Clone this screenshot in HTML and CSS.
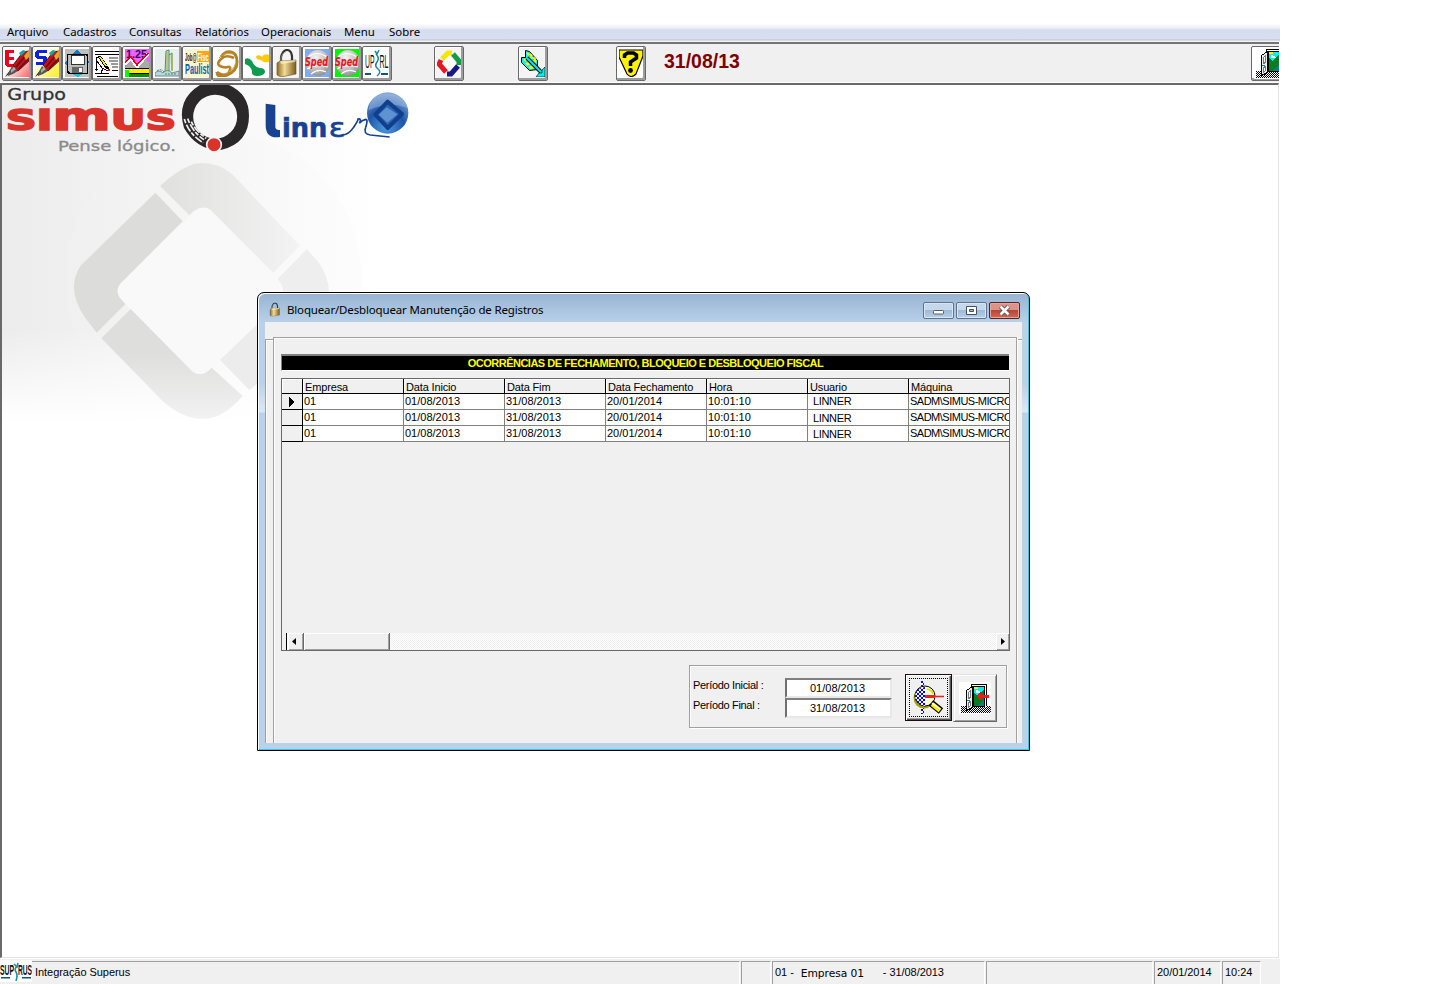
FILE: index.html
```html
<!DOCTYPE html>
<html lang="pt-BR">
<head>
<meta charset="utf-8">
<title>Integração Superus</title>
<link rel="stylesheet" href="styles.css">
</head>
<body>
<svg class="defs" width="0" height="0">
  <defs>
    <pattern id="dither" width="2" height="2" patternUnits="userSpaceOnUse"><path fill="#000" d="M0 0h1v1H0zM1 1h1v1H1z"/></pattern>
    <pattern id="bluedots" width="4" height="4" patternUnits="userSpaceOnUse"><rect width="4" height="4" fill="#fff"/><path fill="#00f" d="M0 0h2v2H0zM2 2h2v2H2z"/></pattern>
    <linearGradient id="redfade" x1="0" y1="0" x2="1" y2="1"><stop offset=".4" stop-color="#fff"/><stop offset="1" stop-color="#f66"/></linearGradient>
    <linearGradient id="yelfade" x1="0" y1="0" x2="1" y2="1"><stop offset=".3" stop-color="#fffbe0"/><stop offset="1" stop-color="#ffee20"/></linearGradient>
    <linearGradient id="brass" x1="0" x2="1"><stop offset="0" stop-color="#8a6a26"/><stop offset=".4" stop-color="#f3dc98"/><stop offset="1" stop-color="#7c5a1e"/></linearGradient>
    <radialGradient id="ball" cx=".4" cy=".3" r=".8"><stop offset="0" stop-color="#f4f4f4"/><stop offset=".6" stop-color="#bdbdbd"/><stop offset="1" stop-color="#808080"/></radialGradient>
    <symbol id="pen" viewBox="0 0 24 28">
      <path fill="#111" d="M0 28l6-8 2 2z"/><path fill="#555" d="M3 25l4-8 6 5-5 3-5 2z"/><path fill="#aaa" d="M6 21l3-3 2 2-5 4z"/>
      <path fill="#c8101c" stroke="#400" stroke-width=".8" d="M8 16L18 3l6-1v10L13 22z"/>
      <path fill="none" stroke="#611" stroke-width="1.800" d="M11 18L21 6M14 20l9-10"/><path fill="#16a6a6" d="M14 4l4-3 3 1-5 5z"/><path fill="#e5a720" d="M19 7l5-6v7l-3 3z"/>
    </symbol>
    <symbol id="door" viewBox="0 0 32 32">
      <rect width="32" height="32" fill="#fff"/>
      <path fill="url(#dither)" d="M2 24h30v7H2z"/>
      <path fill="#fff" d="M12 2h15v23H12z"/>
      <path fill="#0ee" d="M14 5h12v10H14z"/><path fill="#fe0" d="M15 4h4v3h-4z"/>
      <path fill="#fff" d="M17 8h2v1h2v1h2v1h-6z"/><path fill="#087c20" d="M14 10l4 4 7-6 1 6v10H14z"/><path fill="#088080" d="M18 24l8-8v8z"/>
      <path fill="none" stroke="#000" d="M12.500 5V2.500h15V24M14.500 24V4.500h11V24M14 24.500h12"/>
      <path fill="#eee" stroke="#000" d="M7.500 8.500l6-4v21l-6 3z"/><path fill="#fff" stroke="#777" d="M9.500 10.500l2-2v7l-2 1zM9.500 20.500l2-1v4l-2 2z"/><path fill="#088" d="M8 18h3v1H8z"/>
    </symbol>
    <symbol id="lock" viewBox="0 0 24 28">
      <path fill="none" stroke="#333" stroke-width="2.200" d="M6 13V8Q8 1 12 1T17 7v5"/><path fill="none" stroke="#aaa" stroke-width=".7" d="M6 12V8q2-5 5-5"/>
      <path fill="url(#brass)" stroke="#6a4f1c" stroke-width=".6" d="M2 14l3-2 16-1v14l-15 3-4-2z"/><path fill="#fff3c4" opacity=".7" d="M5 12l16-1-1 2-14 2z"/>
    </symbol>
    <symbol id="sped" viewBox="0 0 24 28">
      <ellipse cx="13" cy="14" rx="12" ry="13" fill="url(#ball)"/>
      <path fill="none" stroke="#fff" stroke-width="1.200" d="M3 8q9-7 19 0M2 20q10-6 21-2M6 25q8-6 15-2"/>
      <text class="sped-text" x="0" y="17" textLength="23" lengthAdjust="spacingAndGlyphs">Sped</text>
    </symbol>
  </defs>
</svg>
<div class="app">
  <nav class="menu">
    <span class="m1">Arquivo</span><span class="m2">Cadastros</span><span class="m3">Consultas</span><span class="m4">Relatórios</span><span class="m5">Operacionais</span><span class="m6">Menu</span><span class="m7">Sobre</span>
  </nav>
  <div class="toolbar">
    <div class="group">
      <button class="tool"><svg viewBox="0 0 24 28"><rect width="24" height="28" fill="url(#redfade)"/><path class="crisp" fill="#f0001c" d="M0 1h9v3H4v4h5v3H4v4h7v3H2L0 15z"/><use href="#pen" width="24" height="28"/></svg></button>
      <button class="tool"><svg viewBox="0 0 24 28"><rect width="24" height="28" fill="url(#yelfade)"/><path class="crisp" fill="#0a20e8" d="M2 1h10v3H4v3h6l2 2v5l-2 2H1v-3h7v-3H2L0 8V3z"/><use href="#pen" width="24" height="28"/></svg></button>
      <button class="tool"><svg class="crisp" viewBox="0 0 24 28"><rect width="24" height="28" fill="#c0c0c0"/><path fill="#0878c8" d="M12 0l12 13-11 15L0 14z"/><path fill="#0cc" d="M7 25h11l-5 3z"/><path fill="#bbb" stroke="#000" stroke-width="1.500" d="M2.500 5.500h19l1 1v18h-18l-2-2z"/><path fill="#fff" stroke="#333" d="M6 6h13v9H6z"/><path fill="#666" d="M7 18h11v6H7z"/><path fill="#fff" d="M14 19h3v4h-3z"/></svg></button>
      <button class="tool"><svg class="crisp" viewBox="0 0 24 28"><rect width="24" height="28" fill="#fff"/><path stroke="#000" d="M0 2.500h24M0 5.500h24M0 24.500h14M2 27.500h21M17 21.500h6M0 20.500h3"/><path stroke="#999" stroke-width="2" d="M14 9h9M14 12h9M16 15h7M17 18h6"/><path fill="none" stroke="#000" d="M1.500 22V9l3-2M2 12l5 7 6 3M8 19l-2 5"/><path fill="none" stroke="#000" stroke-width="3" d="M4 7l9 13"/><path fill="none" stroke="#fe0" stroke-width="1.600" d="M5 8l6 9"/><path fill="#e00" d="M13 20h2v2h-2z"/></svg></button>
      <button class="tool"><svg class="crisp" viewBox="0 0 24 28"><rect width="24" height="28" fill="#f060ff"/><text class="num-text" x="1" y="9" textLength="21" lengthAdjust="spacingAndGlyphs">1.25</text><path fill="#aaa" d="M0 18l7-7 5 6 9-8 3 5v6H0z"/><path fill="none" stroke="#fff" stroke-width="3" d="M0 15l6-5 6 8 11-13"/><path fill="none" stroke="#e00010" stroke-width="1.500" d="M0 13l6-5 6 8 11-12"/><path fill="#fe0" d="M0 20h24v5H0z"/><path fill="#0f0" d="M0 21h4v7H0z"/><path fill="#0a8c10" d="M4 25h20v3H4z"/><path stroke="#000" d="M0 19.500h24M4 24.500h20"/></svg></button>
      <button class="tool"><svg viewBox="0 0 24 28"><rect width="24" height="28" fill="#e6efee"/><path fill="#bfe0d0" stroke="#5b8c58" d="M10 23l1-21 3-1v22M14 6l3-2v18"/><path fill="none" stroke="#b0ac42" d="M12 3v18M17 5v16"/><path fill="#b5dcd4" stroke="#568" stroke-width=".7" d="M0 24q4-4 8 0 4-5 9 0l7-2v5H0z"/><path fill="none" stroke="#4b8a53" stroke-dasharray="2 1" d="M2 22q4-3 7 1M10 25h12"/></svg></button>
      <button class="tool"><svg viewBox="0 0 24 28"><rect width="24" height="28" fill="#fff4cc"/><path fill="#ffa51c" d="M12 2h12v11H12z"/><text class="jf-text" x="0" y="11.500" textLength="11.500" lengthAdjust="spacingAndGlyphs">Job@</text><text class="jf-text white" x="12.500" y="11.500" textLength="11" lengthAdjust="spacingAndGlyphs">Fisc</text><text class="jf-text blue" x="0" y="25" textLength="24" lengthAdjust="spacingAndGlyphs">Paulist</text></svg></button>
      <button class="tool"><svg viewBox="0 0 24 28"><rect width="24" height="28" fill="#fff"/><path fill="none" stroke="#b58226" stroke-width="3" d="M6 8Q10 2 16 3t6 10-10 13-10-3"/><path fill="none" stroke="#b58226" stroke-width="2.600" d="M19 9q-8-4-13 1t-1 7 8 1 1 5-12 0"/><path fill="none" stroke="#caa050" d="M4 9q5-6 14-4M8 25q9-1 13-11"/></svg></button>
      <button class="tool"><svg viewBox="0 0 24 28"><rect width="24" height="28" fill="#fff"/><path fill="#0b9c4f" d="M0 10q4-2 7 2 2 6 8 7 5 0 5 4-1 4-8 4-6 0-5-5-1-5-7-7z"/><path fill="#ffc80a" d="M11 7q4-2 6 1 2-4 7-2v7q-6 1-8-2-5 0-5-4z"/></svg></button>
      <button class="tool gray"><svg viewBox="0 0 24 28"><use href="#lock" width="24" height="28"/></svg></button>
      <button class="tool"><svg viewBox="0 0 24 28"><rect width="24" height="28" fill="#82aaf4"/><use href="#sped" width="24" height="28"/></svg></button>
      <button class="tool"><svg viewBox="0 0 24 28"><rect width="24" height="28" fill="#00f400"/><use href="#sped" width="24" height="28"/></svg></button>
      <button class="tool"><svg viewBox="0 0 24 28"><rect width="24" height="28" fill="#fff"/><text class="up-text" x="0" y="19" textLength="9.500" lengthAdjust="spacingAndGlyphs">UP</text><text class="up-text" x="14.500" y="19" textLength="9" lengthAdjust="spacingAndGlyphs">RL</text><path fill="none" stroke="#1786a0" stroke-width="1.500" d="M10 2l2 3 2-4M11 5q4 4 1 8t1 7-1 7"/><path fill="#0d5870" d="M0 24h6v2H0zM16 24h7v2h-7z"/></svg></button>
    </div>
    <button class="tool t-diamond gray"><svg viewBox="0 0 24 28"><path fill="#fff" d="M12 6l8 9-8 9-8-9z"/><g fill="none" stroke-width="5"><path stroke="#f6e600" d="M5 10l6-6h4"/><path stroke="#139b45" d="M16 5l6 7v4"/><path stroke="#1b1782" d="M21 17l-7 8h-4"/><path stroke="#e01923" d="M4 11l-2 4 7 8"/></g></svg></button>
    <button class="tool t-arrow gray"><svg viewBox="0 0 24 28"><path fill="#0cf0f0" stroke="#000" d="M.5 8.500h4V1.500l4 1 8 9v9l-8 1-8-8z"/><path stroke="#fe0" stroke-width="2" stroke-dasharray="3 2" d="M3 10l10 10M6 4l10 10M9 5l7 7M5 14l6 6"/><path fill="none" stroke="#000" stroke-width="4" d="M6 9l16 16"/><path fill="none" stroke="#0ee" stroke-width="2" d="M6 9l16 16"/><path fill="#0ee" stroke="#000" stroke-width=".6" d="M24 18v10H15l3-4h3v-3z"/></svg></button>
    <button class="tool t-help"><svg viewBox="0 0 24 28"><path fill="#fff200" stroke="#000" stroke-width="1.200" d="M0 1h24v6l-7 18q-5 5-9 0L0 8z"/><path fill="none" stroke="#000" stroke-width="3.500" d="M5.500 9V6l3-2h6l3 2v3l-6 4v4"/><circle cx="11.500" cy="21.500" r="2.400"/></svg></button>
    <strong class="date">31/08/13</strong>
    <button class="tool t-exit"><svg class="crisp" viewBox="0 0 32 32"><use href="#door" width="32" height="32"/></svg></button>
  </div>

  <main class="workspace">
    <svg class="brand" viewBox="6 15 1284 1125">
      <defs>
        <linearGradient id="bg" x1="0" x2="1"><stop offset="0" stop-color="#ececec"/><stop offset=".45" stop-color="#f6f6f6"/><stop offset=".87" stop-color="#fff"/></linearGradient>
        <linearGradient id="fade" x1="0" y1="0" x2="0" y2="1"><stop offset=".65" stop-color="#fff" stop-opacity="0"/><stop offset=".9" stop-color="#fff"/></linearGradient>
        <linearGradient id="top" x1="0" x2="1"><stop offset="0" stop-color="#e0e0df"/><stop offset="1" stop-color="#f3f3f3"/></linearGradient>
        <linearGradient id="low" x1="0" y1="0" x2="0" y2="1"><stop offset=".4" stop-color="#dededd"/><stop offset="1" stop-color="#f2f2f2"/></linearGradient>
        <linearGradient id="orbit" x1="0" x2="1"><stop offset="0" stop-color="#f0f0f0"/><stop offset="1" stop-color="#fcfcfc"/></linearGradient>
        <radialGradient id="orb" cx=".45" cy=".85" r=".9"><stop offset="0" stop-color="#4b9be0"/><stop offset=".5" stop-color="#1d55a8"/><stop offset="1" stop-color="#8fb0dc"/></radialGradient>
      </defs>
      <path fill="url(#bg)" d="M6 15h1284v1125H6z"/>
      <ellipse cx="640" cy="590" rx="444" ry="440" fill="url(#orbit)" opacity=".75"/>
      <path fill="url(#fade)" d="M6 15h1284v1125H6z"/>
      <path fill="#f9f9f9" d="M568 408q34-50 66-18L860 640 635 862q-28 50-60 11L392 687l-34-32q-14-20 0-43z"/>
      <path fill="#dcdcdb" d="M466 338L548 424 360 612q-14 20-2 40l18 20-86 86-34-44Q195 626 243 556z"/>
      <path fill="url(#top)" d="M480 318q60-55 105-67 60-10 112 32L900 497l-80 81L632 390q-30-20-64 16z"/>
      <path fill="#eee" d="M920 508l32 34q35 45 35 98H850q0-25-17-44z"/>
      <path fill="#ececec" d="M660 840l120-115v180l-32 25z"/>
      <path fill="url(#low)" d="M392 687l186 188q27 20 57-12l93 85q-50 57-98 67-72 10-140-50L304 775z"/>
      <text class="grupo" x="22" y="59" textLength="176" lengthAdjust="spacingAndGlyphs">Grupo</text>
      <text class="simus" x="17" y="150" textLength="512" lengthAdjust="spacingAndGlyphs">SI<tspan class="arch">m</tspan>US</text>
      <text class="pense" x="174" y="214" textLength="354" lengthAdjust="spacingAndGlyphs">Pense lógico.</text>
      <path fill="#2a2829" fill-rule="evenodd" d="M600 15h87q60 27 60 92 0 82-82 102-72 5-113-65-25-85 48-129zm45 29a66 66 0 1 0 1 132 66 66 0 0 0-1-132z"/>
      <path fill="none" stroke="#f2f2f2" stroke-width="5" stroke-dasharray="13 5 24 4" d="M553 117q13 45 56 71M563 116q16 42 49 63M574 125q12 27 45 50"/>
      <circle cx="642" cy="194" r="22" fill="#d9342b" stroke="#f5f5f5" stroke-width="5"/>
      <path fill="#174191" d="M797 71l29 4v67q2 10 14 8v21q-43 7-43-36z"/>
      <text class="linn" x="846" y="170" textLength="136" lengthAdjust="spacingAndGlyphs">inn</text>
      <text class="linn thin" x="986" y="170" textLength="50" lengthAdjust="spacingAndGlyphs">ε</text>
      <path fill="none" stroke="#174191" stroke-width="5" d="M1026 165q20 0 34-22 14-20 14-26 12-2 4 13 8-10 19-12 8 0 0 24-8 20 14 23l58 6"/>
      <circle cx="1163" cy="99" r="62" fill="url(#orb)"/>
      <path fill="#b5cceb" opacity=".4" d="M1106 91q4-49 57-51 50 3 59 45-50-24-116 6z"/>
      <path fill="#2c65b4" stroke="#123f8c" stroke-width="12" stroke-linejoin="round" d="M1163 65l43 37-43 42-37-40z"/>
      <path fill="#5f92d0" d="M1160 82l32 21-30 25-26-24z"/>
    </svg>

    <section class="window">
      <header class="titlebar">
        <svg class="title-icon" viewBox="0 0 24 28"><use href="#lock" width="24" height="28"/></svg>
        <span class="title">Bloquear/Desbloquear Manutenção de Registros</span>
        <div class="controls">
          <button class="ctl"><svg viewBox="0 0 29 15"><rect x="9.500" y="7.500" width="10" height="3.500" rx=".8" fill="#fff" stroke="#555b66"/></svg></button>
          <button class="ctl"><svg viewBox="0 0 29 15"><path fill="#fff" stroke="#4a505c" d="M9.500 3.500h10v8h-10z"/><path fill="#9db8d5" stroke="#4a505c" d="M12.500 6.500h4v2h-4z"/></svg></button>
          <button class="ctl close"><svg viewBox="0 0 29 15"><path stroke="#555" stroke-width="4.500" d="M10.500 3.500l8 8M18.500 3.500l-8 8"/><path stroke="#fff" stroke-width="2.500" d="M10.500 3.500l8 8M18.500 3.500l-8 8"/></svg></button>
        </div>
      </header>
      <div class="client">
        <div class="outer-tab"></div>
        <div class="panel">
          <h1 class="banner">OCORRÊNCIAS DE FECHAMENTO, BLOQUEIO E DESBLOQUEIO FISCAL</h1>
          <div class="grid">
            <div class="row head"><i></i><b>Empresa</b><b>Data Inicio</b><b>Data Fim</b><b>Data Fechamento</b><b>Hora</b><b>Usuario</b><b>Máquina</b></div>
            <div class="row"><i><svg class="crisp" width="6" height="10" viewBox="0 0 6 10"><path d="M0 0l6 5-6 5z"/></svg></i><span>01</span><span>01/08/2013</span><span>31/08/2013</span><span>20/01/2014</span><span>10:01:10</span><span class="user">LINNER</span><span class="machine">SADM\SIMUS-MICRO</span></div>
            <div class="row"><i></i><span>01</span><span>01/08/2013</span><span>31/08/2013</span><span>20/01/2014</span><span>10:01:10</span><span class="user low">LINNER</span><span class="machine">SADM\SIMUS-MICRO</span></div>
            <div class="row"><i></i><span>01</span><span>01/08/2013</span><span>31/08/2013</span><span>20/01/2014</span><span>10:01:10</span><span class="user low">LINNER</span><span class="machine">SADM\SIMUS-MICRO</span></div>
            <div class="scroll">
              <div class="sb left"><svg width="4" height="7" viewBox="0 0 4 7"><path d="M4 0v7L0 3.500z"/></svg></div>
              <div class="thumb"></div><div class="track"></div>
              <div class="sb right"><svg width="4" height="7" viewBox="0 0 4 7"><path d="M0 0v7l4-3.500z"/></svg></div>
            </div>
          </div>
          <div class="filter">
            <div class="labels"><label>Período Inicial :</label><label>Período Final :</label></div>
            <div class="inputs"><div class="input">01/08/2013</div><div class="input">31/08/2013</div></div>
            <button class="big focus"><span class="dots"><svg width="32" height="34" viewBox="0 0 32 34">
              <path class="crisp" fill="url(#bluedots)" d="M8 0h3v33H8z"/>
              <circle cx="11" cy="17" r="10.500" fill="#aaa200"/><circle cx="12" cy="15" r="10" fill="#ffffd0" stroke="#000"/>
              <path fill="url(#bluedots)" d="M12 6v19Q2 23 2 15t10-9z"/><path stroke="#ed2020" stroke-width="3" d="M12 15.500h10"/><path stroke="#ed2020" stroke-width="1.600" d="M22 15.500h9"/><path fill="none" stroke="#dada00" stroke-width="1.500" d="M14 8q5 1 6 5"/>
              <path stroke="#000" stroke-width="7" d="M18 22l10 8"/><path stroke="#fe0" stroke-width="4.500" d="M19 23l8 6.500"/><path stroke="#fff" stroke-width="1.500" d="M19 22l8 6"/></svg></span></button>
            <button class="big exit"><svg class="crisp" width="32" height="32" viewBox="0 0 32 32"><use href="#door" width="32" height="32"/><path fill="#f01818" d="M17 14l5-4v3h8v3h-8v3z"/></svg></button>
          </div>
        </div>
      </div>
    </section>
  </main>

  <footer class="status">
    <svg class="status-logo" viewBox="0 0 32 22">
      <rect width="32" height="22" fill="#fff"/>
      <text class="superus-text" x="0" y="15" textLength="14" lengthAdjust="spacingAndGlyphs">SUP</text>
      <text class="superus-text" x="18" y="15" textLength="14" lengthAdjust="spacingAndGlyphs">RUS</text>
      <path fill="none" stroke="#1791a4" stroke-width="1.600" d="M14 4l3 3 1-4M17 6q-3 3-1 6t0 9"/><path fill="#0d5870" d="M1 17h9v1.500H1zM22 17h9v1.500h-9z"/>
    </svg>
    <div class="cell s1">Integração Superus</div>
    <div class="cell s2"></div>
    <div class="cell s3"><span>01 -</span><span class="company">Empresa 01</span><span>- 31/08/2013</span></div>
    <div class="cell s4"></div>
    <div class="cell s5">20/01/2014</div>
    <div class="cell s6">10:24</div>
  </footer>
</div>
</body>
</html>
```
FILE: styles.css
```css
* { box-sizing: border-box; }
body { margin: 0; background: #fff; font: 11px/13px "Liberation Sans", Arial, sans-serif; color: #000; overflow: hidden; }
button { padding: 0; margin: 0; font: inherit; }
svg { display: block; }
.defs { position: absolute; }
.crisp { shape-rendering: crispEdges; }
.app { width: 1280px; height: 984px; padding-top: 24px; display: flex; flex-direction: column; }

.menu { height: 18px; display: flex; padding-left: 7px; font: 11.400px/16px "Noto Sans", sans-serif; white-space: nowrap;
  background: linear-gradient(#fdfdfe 0, #eceff7 4px, #e2e6f2 5px, #d5dcee 6px, #d8dff0 15px, #b9c0d2 16px, #f4f4f4 17px); }
.m1 { width: 56px; } .m2, .m3, .m4 { width: 66px; } .m5 { width: 83px; } .m6 { width: 45px; }

.toolbar { height: 41px; display: flex; align-items: flex-start; padding: 2px 0 0 2px; width: 1279px; overflow: hidden;
  background: #f0f0f0; border-top: 2px solid #747474; box-shadow: inset 0 -1px #fff; }
.group { display: flex; }
.tool { flex: none; display: flex; align-items: flex-start; width: 30px; height: 35px; padding: 2px 3px 3px 2px; background: #fff; border: 1px solid #696969; border-radius: 2px; box-shadow: inset -2px -2px #9c9c9c, inset 1px 1px #fff; overflow: hidden; }
.tool svg { flex: none; width: 24px; height: 28px; }
.tool.gray { background: #f4f4f4; }
.t-diamond { margin-left: 42px; }
.t-arrow { margin-left: 54px; }
.t-help { margin-left: 68px; }
.date { margin-left: 18px; font-size: 19.500px; line-height: 30px; color: #800000; }
.tool.t-exit { margin-left: auto; margin-right: -2px; padding-top: 0; }
.tool.t-exit svg { width: 32px; height: 32px; }
.sped-text { font: italic bold 12px "DejaVu Sans", sans-serif; fill: #ee1020; }
.num-text { font: bold 11px "Liberation Sans", sans-serif; fill: #400060; }
.jf-text { font: bold 11px "Liberation Sans", sans-serif; fill: #222; }
.jf-text.white { fill: #fff; }
.jf-text.blue { font-size: 14px; fill: #0b63ad; }
.up-text { font: 19px "Liberation Sans", sans-serif; fill: #111; }
.superus-text { font: bold 14px "Liberation Sans", sans-serif; fill: #111; }

.workspace { flex: 1; position: relative; width: 1279px; border: solid #696969; border-width: 2px 1px 0 2px; border-right-color: #e3e3e3; border-bottom: 1px solid #e3e3e3; background: #fff; overflow: hidden; }
.brand { width: 428px; height: 375px; }
.grupo { font: 49px "DejaVu Sans", sans-serif; fill: #333; stroke: #333; stroke-width: 1px; }
.simus { font: bold 86px "DejaVu Sans", sans-serif; fill: #d9342b; stroke: #d9342b; stroke-width: 5px; }
.arch { font-size: 112px; }
.pense { font: 44px "DejaVu Sans", sans-serif; fill: #8b8b8b; stroke: #8b8b8b; stroke-width: 1px; }
.linn { font: bold 82px "DejaVu Sans", sans-serif; fill: #174191; stroke: #174191; stroke-width: 2px; }
.linn.thin { font-weight: normal; }

.window { position: absolute; left: 255px; top: 207px; width: 773px; height: 459px; padding: 0 7px 7px; border: 1px solid #000; border-radius: 7px 7px 0 0; overflow: hidden;
  background: linear-gradient(#98b4d2, #b9d1ea 30px, #b9d1ea 90px, #dce8f5 119px, #b9d1ea 120px); box-shadow: inset 1px 1px #fff, inset -1px -1px #32c8e8; }
.titlebar { height: 29px; display: flex; align-items: flex-start; }
.title-icon { width: 12px; height: 15px; margin: 9px 0 0 4px; }
.title { margin: 9px 0 0 6px; font: 11.500px/16px "Noto Sans", sans-serif; letter-spacing: -.16px; white-space: nowrap; }
.controls { margin: 9px 2px 0 auto; display: flex; gap: 2px; }
.ctl { width: 31px; height: 17px; border: 1px solid #5f738f; border-radius: 2px; background: linear-gradient(#c5d7eb 45%, #9fbad7 50%, #b8d0e8); box-shadow: inset 0 0 0 1px #d9e7f5; }
.ctl svg { width: 29px; height: 15px; }
.ctl.close { border-color: #5b2323; background: linear-gradient(#dc9388 45%, #bd4434 50%, #cf6a57); box-shadow: inset 0 0 0 1px #e0a89f; }
.client { height: 421px; background: #f0f0f0; padding: 15px 5px 0 8px; position: relative; }
.outer-tab { position: absolute; left: 0; right: 0; top: 17px; bottom: 0; border-left: 1px solid #a0a0a0; border-top: 1px solid #a0a0a0; box-shadow: inset 1px 1px #fff; }
.panel { position: relative; height: 406px; padding: 16px 6px 0 7px; background: #f0f0f0; border: solid #a0a0a0; border-width: 1px 1px 0; box-shadow: inset 1px 1px #fff, 1px 0 #fff; }
.banner { margin: 0 1px 7px 0; height: 17px; border: solid #808080; border-width: 2px 0 0 1px; border-bottom: 1px solid #fff; background: #000; color: #ff0; text-align: center; font-size: 11px; line-height: 14px; letter-spacing: -.5px; white-space: nowrap; }
.grid { height: 273px; border: 1px solid #696969; display: flex; flex-direction: column; overflow: hidden; }
.row { display: grid; grid-template-columns: 21px repeat(7, 101px); height: 16px; white-space: nowrap; overflow: hidden; flex: none; }
.row > * { border-right: 1px solid #808080; border-bottom: 1px solid #808080; padding: 1px 0 0 1px; background: #fff; font-weight: normal; overflow: hidden; }
.row i { border-color: #000; background: #f0f0f0; padding: 3px 0 0 7px; }
.row.head { height: 15px; }
.row.head > * { background: #f0f0f0; border-color: #000; padding: 2px 0 0 2px; box-shadow: inset 1px 1px #fff; line-height: 13px; letter-spacing: -.15px; }
.row .user { padding-left: 5px; letter-spacing: -.35px; }
.row .low { padding-top: 2px; }
.row .machine { letter-spacing: -.5px; }
.scroll { margin-top: auto; height: 17px; padding-left: 4px; display: flex; }
.sb { display: flex; align-items: center; justify-content: center; background: #f0f0f0; }
.sb.left { width: 18px; padding-right: 2px; border-left: 1px solid #000; border-right: 1px solid #696969; box-shadow: inset 2px 1px #fff, inset -1px -1px #a0a0a0; }
.thumb { width: 86px; background: #f0f0f0; border-right: 1px solid #696969; box-shadow: inset 1px 1px #fff, inset -1px -1px #a0a0a0; }
.track { flex: 1; background: repeating-conic-gradient(#f0f0f0 0 25%, #fff 0 50%) 0 0 / 2px 2px; }
.sb.right { width: 13px; box-shadow: inset 1px 1px #fff, inset -1px -1px #a0a0a0; }
.filter { margin: 14px 3px 0 auto; width: 318px; height: 63px; display: flex; border: 1px solid #a0a0a0; box-shadow: inset 1px 1px #fff, 1px 1px #fff; padding-left: 3px; }
.labels { width: 92px; padding-top: 13px; display: flex; flex-direction: column; gap: 7px; white-space: nowrap; letter-spacing: -.32px; }
.inputs { width: 107px; padding-top: 12px; }
.input { height: 20px; padding-right: 2px; border: 2px solid #696969; border-color: #808080 #e8e8e8 #e8e8e8 #707070; background: #fff; text-align: center; line-height: 17px; }
.big { background: #f0f0f0; border: 1px solid #e3e3e3; border-right-color: #696969; border-bottom-color: #696969; display: flex; align-items: center; justify-content: center; box-shadow: inset 1px 1px #fff, inset -1px -1px #a0a0a0; }
.focus { width: 47px; height: 47px; margin: 8px 0 0 13px; border: 1px solid #1b0b12; box-shadow: inset 1px 1px #fff, inset -1px -1px #555, inset -2px -2px #a0a0a0; }
.dots { width: 39px; height: 39px; border: 1px dotted #000; display: flex; align-items: center; justify-content: center; }
.exit { width: 44px; height: 48px; margin: 8px 0 0 1px; }

.status { height: 26px; padding-top: 3px; display: flex; background: #f0f0f0; box-shadow: inset 0 1px #fff; line-height: 21px; white-space: nowrap; letter-spacing: -.05px; }
.status-logo { width: 32px; height: 22px; margin-top: -1px; }
.cell { height: 23px; border-top: 1px solid #a0a0a0; border-right: 1px solid #fff; padding-left: 3px; flex: none; }
.s1 { width: 708px; margin-right: 1px; }
.cell + .cell { border-left: 1px solid #a0a0a0; }
.cell + .cell { padding-left: 2px; }
.s2 { width: 30px; margin-right: 1px; }
.s3 { width: 213px; margin-right: 1px; display: flex; }
.company { margin: 1px 0 0 7px; width: 82px; font: 10.700px/21px "DejaVu Sans", sans-serif; }
.s4 { width: 167px; margin-right: 1px; }
.s5 { width: 67px; margin-right: 1px; }
.s6 { width: 39px; }
```
